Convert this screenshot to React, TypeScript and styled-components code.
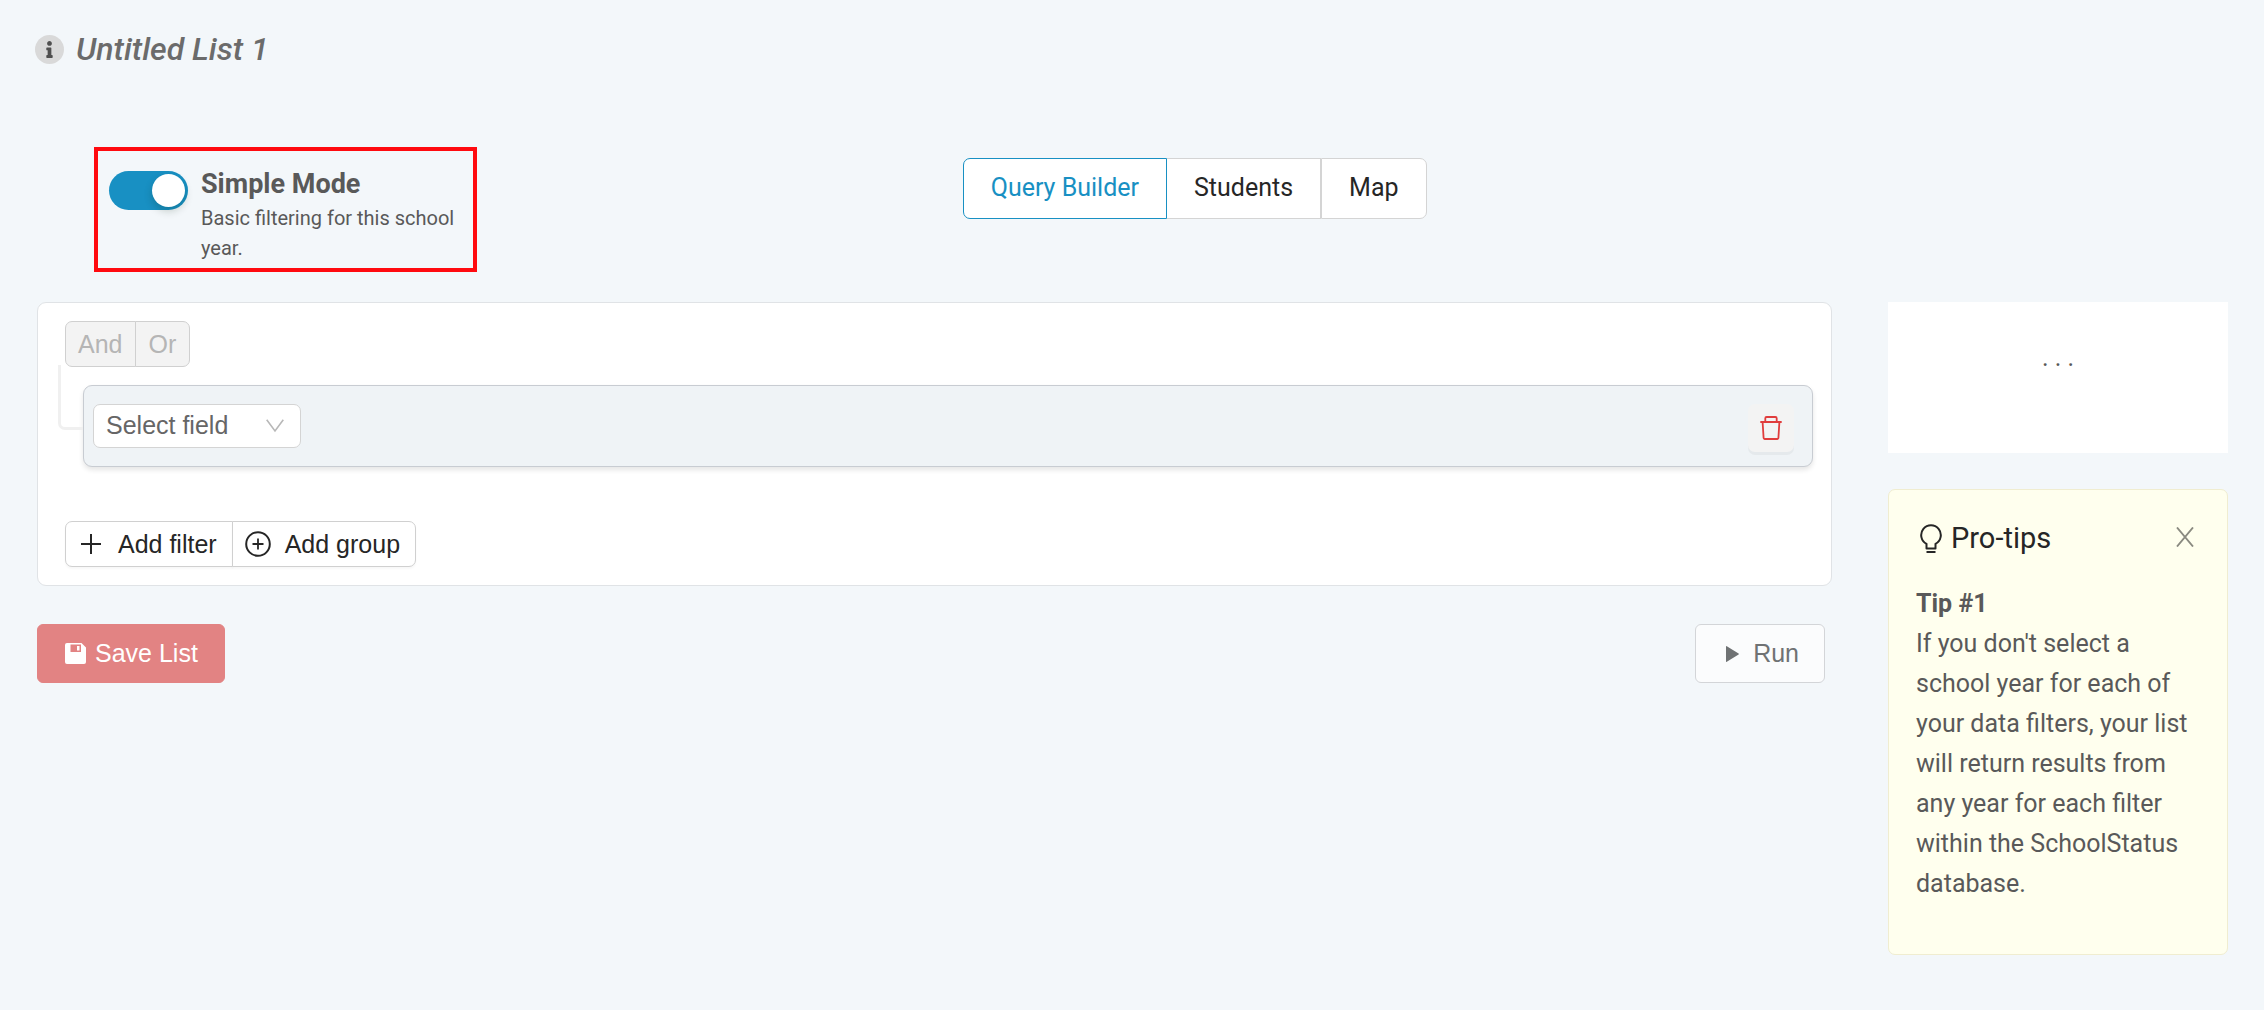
import React, { useState } from "react";
import styled, { createGlobalStyle } from "styled-components";
import { FaInfo } from "react-icons/fa";

const sans = `Roboto, "Liberation Sans", sans-serif`;
const builderSans = `"Liberation Sans", Arial, sans-serif`;

const GlobalStyle = createGlobalStyle`
  *, *::before, *::after { box-sizing: border-box; }
  body { margin: 0; background: #f3f7fa; color: #595959; font-family: ${sans}; }
  button, select, input { font: inherit; margin: 0; }
  h1, h2, h3, p { margin: 0; }
  svg { display: block; flex: none; }
`;

const Page = styled.div`
  padding: 24px 36px 56px;
`;

const TitleBar = styled.header`
  display: flex;
  align-items: center;
  gap: 12px;
  height: 50px;
  margin-left: -1px;
`;

const InfoBadge = styled.span`
  display: grid;
  place-items: center;
  width: 29px;
  height: 29px;
  border-radius: 50%;
  background: #d9d9d9;
  color: #4f4f4f;
  font-size: 17px;
`;

const Title = styled.h1`
  font-size: 32px;
  line-height: 40px;
  font-weight: 500;
  font-style: italic;
  color: #6b6b6b;
`;

const Toolbar = styled.div`
  display: grid;
  grid-template-columns: 37fr auto 32fr;
  align-items: start;
  margin-top: 73px;
  margin-bottom: 30px;
`;

const ModeBox = styled.label`
  display: flex;
  gap: 13px;
  width: 383px;
  height: 125px;
  margin-left: 58px;
  padding: 20px 11px 0;
  border: 4px solid #ff0a0f;
  cursor: pointer;
`;

const Switch = styled.input`
  appearance: none;
  flex: none;
  display: flex;
  width: 79px;
  height: 39px;
  padding: 3px;
  border-radius: 20px;
  background: #bfbfbf;
  cursor: pointer;

  &::before {
    content: "";
    width: 33px;
    height: 33px;
    border-radius: 50%;
    background: #fff;
    box-shadow: 0 4px 8px rgba(0, 35, 11, 0.2);
  }
  &:checked {
    justify-content: flex-end;
    background: #1890c3;
  }
`;

const ModeText = styled.span`
  display: flex;
  flex-direction: column;
  margin-top: -4px;
`;

const ModeName = styled.span`
  font-size: 27px;
  line-height: 34px;
  font-weight: 700;
  padding-bottom: 2px;
`;

const ModeHint = styled.span`
  font-size: 20px;
  line-height: 30px;
`;

const Tabs = styled.nav`
  display: flex;
  margin-top: 11px;
`;

const Tab = styled.button<{ $active: boolean }>`
  height: 61px;
  padding: 0 27px 2px;
  border: 1px solid ${(p) => (p.$active ? "#1890c3" : "#d4d4d4")};
  background: #fff;
  color: ${(p) => (p.$active ? "#1890c3" : "#262626")};
  font-size: 25px;
  line-height: 40px;
  cursor: pointer;

  &:first-child { border-radius: 7px 0 0 7px; }
  &:nth-child(2) { border-left-width: 0; }
  &:last-child { border-radius: 0 7px 7px 0; }
`;

const Columns = styled.div`
  display: grid;
  grid-template-columns: minmax(0, 1fr) 340px;
  align-items: start;
  gap: 56px;
`;

const Main = styled.main`
  padding-left: 1px;
`;

const Builder = styled.section`
  padding: 18px;
  padding-left: 27px;
  border: 1px solid #e0e3e6;
  border-radius: 9px;
  background: #fff;
  font-family: ${builderSans};
`;

const ButtonGroup = styled.div`
  display: flex;
`;

const GroupButton = styled.button`
  display: flex;
  align-items: center;
  gap: 14px;
  height: 46px;
  margin-left: -1px;
  padding: 0 15px 0 12px;
  border: 1px solid #d0d0d0;
  background: #fff;
  color: #262626;
  font-size: 25px;
  box-shadow: 0 2px 2px rgba(0, 0, 0, 0.03);
  cursor: pointer;

  &:first-child { border-radius: 7px 0 0 7px; margin-left: 0; }
  &:last-child { border-radius: 0 7px 7px 0; }
  &:disabled {
    padding: 0 13px 0 12px;
    background: #f3f3f3;
    color: #b5b5b5;
    box-shadow: none;
    cursor: default;
  }
`;

const RuleList = styled.div`
  position: relative;
  margin: 18px 0 54px 18px;
`;

const Connector = styled.span`
  position: absolute;
  left: -25px;
  top: -20px;
  width: 25px;
  height: 65px;
  border: solid #f0f0f0;
  border-width: 0 0 3px 3px;
  border-radius: 0 0 0 7px;
`;

const Rule = styled.div`
  display: flex;
  align-items: center;
  justify-content: space-between;
  height: 82px;
  padding: 0 18px 0 9px;
  border: 1px solid #c8ccd2;
  border-radius: 9px;
  background: #eff3f6;
  box-shadow: 0 3px 5px rgba(0, 0, 0, 0.1);
`;

const FieldPicker = styled.span`
  display: grid;
  align-items: center;
  width: 208px;
  height: 44px;
  color: #b8b8b8;

  & > * { grid-area: 1 / 1; }
  & > svg { justify-self: end; margin-right: 17px; pointer-events: none; }
`;

const FieldSelect = styled.select`
  appearance: none;
  width: 100%;
  height: 100%;
  padding: 0 44px 2px 12px;
  border: 1px solid #d4d4d4;
  border-radius: 7px;
  background: #fff;
  color: #666;
  font-size: 25px;
  cursor: pointer;
`;

const DeleteButton = styled.button`
  display: grid;
  place-items: center;
  width: 46px;
  height: 48px;
  margin-top: 4px;
  padding: 0;
  border: 0;
  border-radius: 7px;
  background: #f3f3f3;
  color: #e03c3c;
  box-shadow: 0 3px 0 rgba(0, 0, 0, 0.04);
  cursor: pointer;
`;

const Actions = styled.div`
  display: flex;
  justify-content: space-between;
  margin-top: 38px;
  padding-right: 7px;
`;

const ActionButton = styled.button<{ $primary?: boolean }>`
  display: flex;
  align-items: center;
  gap: ${(p) => (p.$primary ? "9px" : "14px")};
  height: 59px;
  padding: ${(p) => (p.$primary ? "0 26px 0 27px" : "0 25px 0 30px")};
  border: 1px solid ${(p) => (p.$primary ? "#e28383" : "#d3d5d8")};
  border-radius: 6px;
  background: ${(p) => (p.$primary ? "#e28383" : "#fbfcfd")};
  color: ${(p) => (p.$primary ? "#fff" : "#6f7274")};
  font-family: ${builderSans};
  font-size: 25px;
  cursor: pointer;
`;

const Aside = styled.aside`
  display: flex;
  flex-direction: column;
  gap: 36px;
`;

const CountCard = styled.div`
  height: 151px;
  padding-top: 36px;
  background: #fff;
  text-align: center;
  font-size: 25px;
  line-height: 40px;
`;

const TipCard = styled.section`
  padding: 28px 27px 50px;
  border: 1px solid #f0edd0;
  border-radius: 7px;
  background: #ffffee;
`;

const TipHeader = styled.div`
  display: flex;
  align-items: center;
  justify-content: space-between;
  height: 40px;
  margin-bottom: 26px;
`;

const TipTitle = styled.h2`
  display: flex;
  align-items: center;
  gap: 9px;
  padding-left: 4px;
  font-size: 29px;
  line-height: 40px;
  font-weight: 400;
  color: #262626;
`;

const CloseButton = styled.button`
  display: grid;
  place-items: center;
  padding: 0 6px 2px 0;
  border: 0;
  background: none;
  color: #8a8a80;
  cursor: pointer;
`;

const TipName = styled.h3`
  font-size: 25px;
  line-height: 40px;
  font-weight: 700;
`;

const TipText = styled.p`
  font-size: 25px;
  line-height: 40px;
`;

const SaveIcon = () => (
  <svg width="21" height="21" viewBox="0 0 21 21" aria-hidden="true">
    <path
      fill="currentColor"
      fillRule="evenodd"
      d="M2 0h14.500L21 4.500V19a2 2 0 0 1-2 2H2a2 2 0 0 1-2-2V2a2 2 0 0 1 2-2zM5.500 1.500V9h10.500V1.500zM12 3v4.500h2.500V3z"
    />
  </svg>
);

const PlayIcon = () => (
  <svg width="13" height="16" viewBox="0 0 13 16" aria-hidden="true">
    <path fill="currentColor" d="M0 .5v15q0 .8.8.3L12.600 8.500q.6-.5 0-1L.8.2Q0-.3 0 .5z" />
  </svg>
);

const ChevronIcon = () => (
  <svg width="18" height="14" viewBox="0 0 18 14" aria-hidden="true">
    <path fill="none" stroke="currentColor" strokeWidth="1.6" d="M.7.8 9 12 17.300.8" />
  </svg>
);

const TrashIcon = () => (
  <svg width="22" height="24" viewBox="0 0 22 24" aria-hidden="true">
    <path
      fill="none"
      stroke="currentColor"
      strokeWidth="1.8"
      strokeLinejoin="round"
      d="M.3 6h21.400M5.300 6V2.300Q5.300 1 6.600 1h8.800q1.300 0 1.300 1.300V6M2.600 6l1 16q.1 1 1 1h12.800q.9 0 1-1l1-16"
    />
  </svg>
);

const PlusIcon = () => (
  <svg width="26" height="26" viewBox="0 0 26 26" aria-hidden="true">
    <path fill="none" stroke="currentColor" strokeWidth="2" d="M13 3v20M3 13h20" />
  </svg>
);

const PlusCircleIcon = () => (
  <svg width="26" height="26" viewBox="0 0 26 26" aria-hidden="true">
    <circle cx="13" cy="13" r="11.800" fill="none" stroke="currentColor" strokeWidth="2" />
    <path fill="none" stroke="currentColor" strokeWidth="1.800" d="M13 7.500v11M7.500 13h11" />
  </svg>
);

const BulbIcon = () => (
  <svg width="22" height="29" viewBox="0 0 22 29" aria-hidden="true">
    <path
      fill="none"
      stroke="currentColor"
      strokeWidth="2"
      strokeLinejoin="round"
      d="M6.500 24.500v-4.700A9.800 9.800 0 1 1 15.500 19.800v4.700zM6.500 28h9"
    />
  </svg>
);

const CloseIcon = () => (
  <svg width="18" height="20" viewBox="0 0 18 20" aria-hidden="true">
    <path fill="none" stroke="currentColor" strokeWidth="1.900" d="M1 .500 17 19.500M17 .500 1 19.500" />
  </svg>
);

const tabs = ["Query Builder", "Students", "Map"];

export default function App() {
  const [tab, setTab] = useState(tabs[0]);
  const [simple, setSimple] = useState(true);

  return (
    <>
      <GlobalStyle />
      <Page>
        <TitleBar>
          <InfoBadge>
            <FaInfo />
          </InfoBadge>
          <Title>Untitled List 1</Title>
        </TitleBar>

        <Toolbar>
          <ModeBox>
            <Switch
              type="checkbox"
              role="switch"
              checked={simple}
              onChange={(e) => setSimple(e.target.checked)}
            />
            <ModeText>
              <ModeName>Simple Mode</ModeName>
              <ModeHint>Basic filtering for this school year.</ModeHint>
            </ModeText>
          </ModeBox>
          <Tabs>
            {tabs.map((name) => (
              <Tab key={name} type="button" $active={name === tab} onClick={() => setTab(name)}>
                {name}
              </Tab>
            ))}
          </Tabs>
        </Toolbar>

        <Columns>
          <Main>
            <Builder>
              <ButtonGroup>
                <GroupButton type="button" disabled>And</GroupButton>
                <GroupButton type="button" disabled>Or</GroupButton>
              </ButtonGroup>
              <RuleList>
                <Connector />
                <Rule>
                  <FieldPicker>
                    <FieldSelect aria-label="Field">
                      <option>Select field</option>
                    </FieldSelect>
                    <ChevronIcon />
                  </FieldPicker>
                  <DeleteButton type="button" aria-label="Delete filter">
                    <TrashIcon />
                  </DeleteButton>
                </Rule>
              </RuleList>
              <ButtonGroup>
                <GroupButton type="button">
                  <PlusIcon />
                  Add filter
                </GroupButton>
                <GroupButton type="button">
                  <PlusCircleIcon />
                  Add group
                </GroupButton>
              </ButtonGroup>
            </Builder>
            <Actions>
              <ActionButton type="button" $primary>
                <SaveIcon />
                Save List
              </ActionButton>
              <ActionButton type="button">
                <PlayIcon />
                Run
              </ActionButton>
            </Actions>
          </Main>

          <Aside>
            <CountCard>. . .</CountCard>
            <TipCard>
              <TipHeader>
                <TipTitle>
                  <BulbIcon />
                  Pro-tips
                </TipTitle>
                <CloseButton type="button" aria-label="Close">
                  <CloseIcon />
                </CloseButton>
              </TipHeader>
              <TipName>Tip #1</TipName>
              <TipText>
                If you don't select a school year for each of your data filters, your list will
                return results from any year for each filter within the SchoolStatus database.
              </TipText>
            </TipCard>
          </Aside>
        </Columns>
      </Page>
    </>
  );
}
